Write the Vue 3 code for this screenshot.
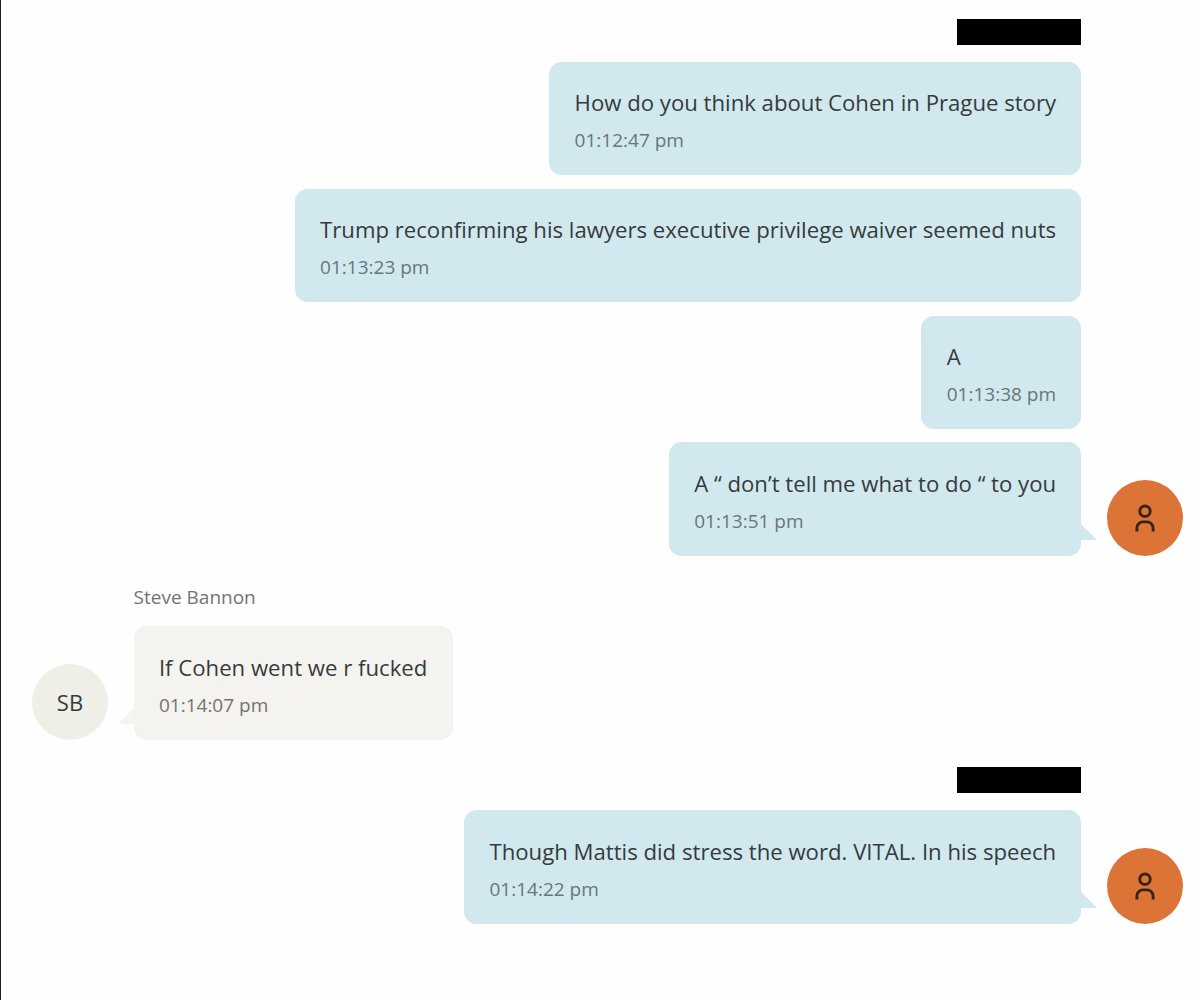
<template>
  <main class="chat">
    <section
      v-for="group in groups"
      :key="group.id"
      class="group"
      :class="group.mine ? 'group--mine' : 'group--theirs'"
    >
      <div class="avatar">
        <span v-if="group.initials">{{ group.initials }}</span>
        <svg v-else class="avatar__icon" viewBox="0 0 22 30" fill="none">
          <circle cx="11" cy="8.2" r="5.2" />
          <path d="M2.9 28.4v-3.5a6 6 0 0 1 6-6h4.2a6 6 0 0 1 6 6v3.5" />
        </svg>
      </div>

      <div class="group__body">
        <div v-if="group.name" class="name">{{ group.name }}</div>
        <div v-else class="redacted" />

        <div class="messages">
          <div v-for="msg in group.messages" :key="msg.time" class="bubble">
            <p class="bubble__text">{{ msg.text }}</p>
            <time class="bubble__time">{{ msg.time }}</time>
          </div>
        </div>
      </div>
    </section>
  </main>
</template>

<script setup>
const groups = [
  {
    id: 1,
    mine: true,
    messages: [
      { text: 'How do you think about Cohen in Prague story', time: '01:12:47 pm' },
      { text: 'Trump reconfirming his lawyers executive privilege waiver seemed nuts', time: '01:13:23 pm' },
      { text: 'A', time: '01:13:38 pm' },
      { text: 'A “ don’t tell me what to do “ to you', time: '01:13:51 pm' },
    ],
  },
  {
    id: 2,
    mine: false,
    name: 'Steve Bannon',
    initials: 'SB',
    messages: [{ text: 'If Cohen went we r fucked', time: '01:14:07 pm' }],
  },
  {
    id: 3,
    mine: true,
    messages: [
      { text: 'Though Mattis did stress the word. VITAL. In his speech', time: '01:14:22 pm' },
    ],
  },
];
</script>

<style>
body {
  margin: 0;
  background: #fefefe;
}
</style>

<style scoped>
.chat {
  box-sizing: border-box;
  height: 1000px;
  padding: 18.5px 17px 0 31px;
  border-left: 1px solid #1e1c1e;
  overflow: hidden;
  font-family: "Open Sans", "Noto Sans", sans-serif;
  color: #363b3c;
}

.group {
  display: flex;
  align-items: flex-end;
  gap: 25.6px;
}

.group--mine {
  flex-direction: row-reverse;
}

.group--theirs {
  margin: 27px 0;
}

.group__body,
.messages {
  display: flex;
  flex-direction: column;
  align-items: flex-start;
}

.group--mine .group__body,
.group--mine .messages {
  align-items: flex-end;
}

.messages {
  gap: 13.3px;
}

.redacted {
  width: 124.6px;
  height: 26px;
  margin-bottom: 17.3px;
  background: #000;
}

.name {
  height: 26px;
  margin-bottom: 17.3px;
  font-size: 19px;
  line-height: 28px;
  color: #737373;
}

.bubble {
  position: relative;
  box-sizing: border-box;
  height: 113.6px;
  padding: 24.4px 25.3px;
  border-radius: 12.5px;
  background: #d1e8ee;
}

.group--theirs .bubble {
  background: #f4f3ef;
}

/* tail on the last bubble of a group */
.bubble:last-child::after {
  content: "";
  position: absolute;
  right: -16px;
  bottom: 15.6px;
  width: 17px;
  height: 16px;
  background: inherit;
  clip-path: polygon(0 0, 1px 0, 100% 100%, 0 100%);
}

.group--theirs .bubble:last-child::after {
  right: auto;
  left: -16px;
  transform: scaleX(-1);
}

.bubble__text {
  margin: 0 0 8px;
  font-size: 22.16px;
  line-height: 32px;
  white-space: nowrap;
}

.bubble__time {
  display: block;
  font-size: 19.02px;
  line-height: 29px;
  color: #697679;
}

.group--theirs .bubble__time {
  color: #747472;
}

.avatar {
  display: flex;
  flex: none;
  align-items: center;
  justify-content: center;
  width: 76px;
  height: 76px;
  border-radius: 50%;
  background: #efefe8;
  font-size: 22px;
}

.group--mine .avatar {
  background: #db7436;
}

.avatar__icon {
  width: 22px;
  height: 30px;
  stroke: #38230f;
  stroke-width: 2.9;
}
</style>
